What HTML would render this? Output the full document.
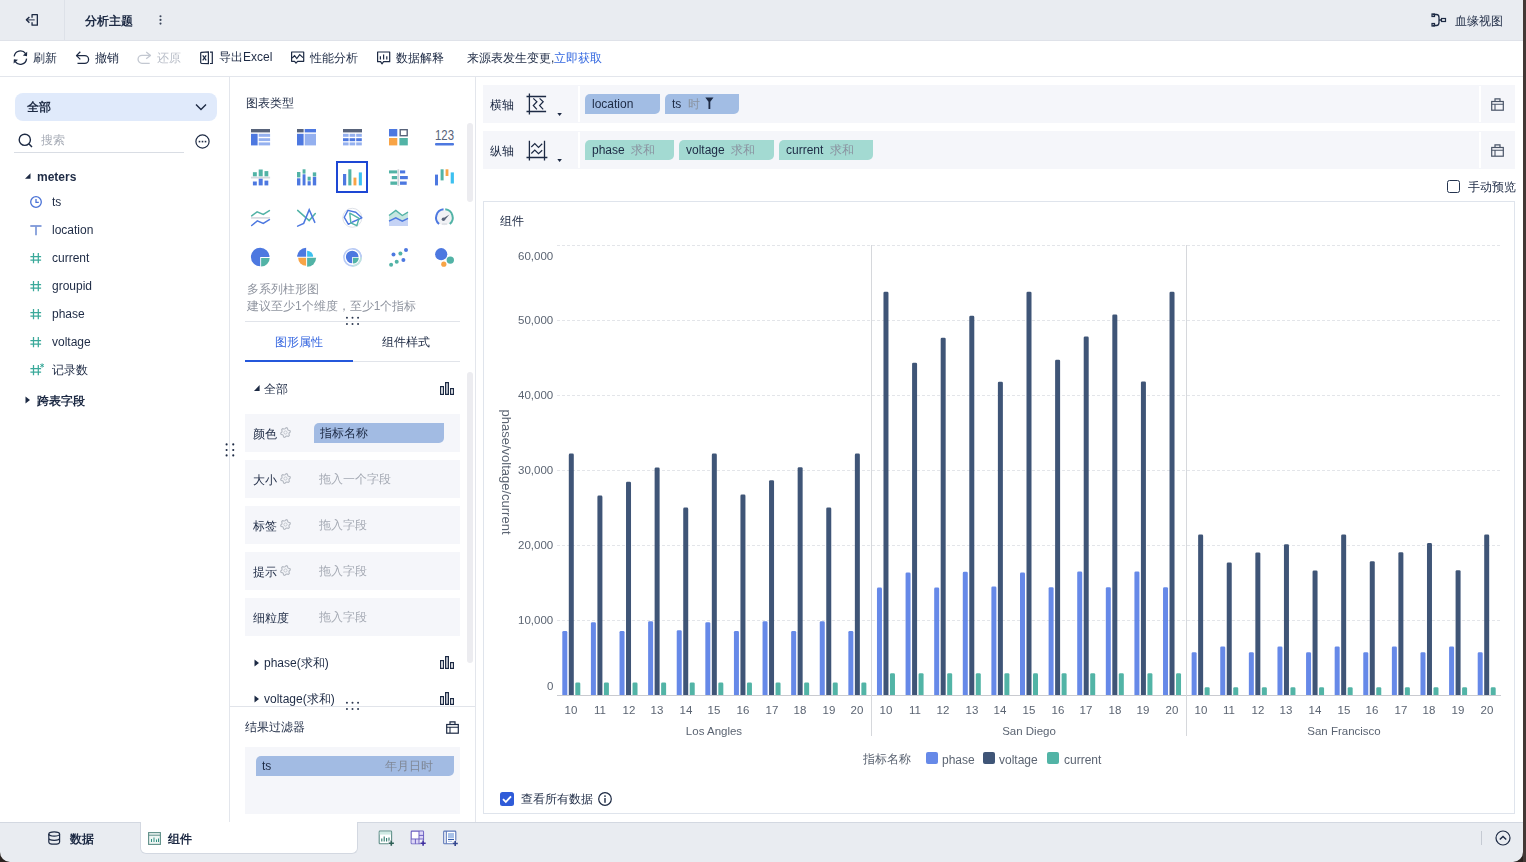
<!DOCTYPE html><html><head><meta charset="utf-8"><style>
html,body{margin:0;padding:0;width:1526px;height:862px;overflow:hidden;background:#fff;}
body{position:relative;font-family:"Liberation Sans",sans-serif;}
.t{position:absolute;white-space:nowrap;will-change:transform;}
.r{position:absolute;}
svg.r{overflow:visible;}
</style></head><body>
<div class="r" style="left:0px;top:0px;width:1526px;height:40px;background:#e9ecf1;"></div>
<div class="r" style="left:0px;top:40px;width:1526px;height:1px;background:#dfe2e9;"></div>
<div class="r" style="left:64px;top:0px;width:1px;height:40px;background:#dde1e8;"></div>
<svg class="r" style="left:25px;top:13px;" width="14" height="14" viewBox="0 0 14 14"><path d="M7.05 4.7V1.65H12.35V12.15H7.05V9.3" fill="none" stroke="#1d2a44" stroke-width="1.3" stroke-linejoin="round"/><path d="M1.6 6.85H9.7" stroke="#5b6579" stroke-width="1.4"/><path d="M4.4 4L1.4 6.85L4.4 9.7" fill="none" stroke="#1d2a44" stroke-width="1.4" stroke-linejoin="round"/></svg>
<span class="t" style="left:85px;top:11px;font-size:12px;line-height:20px;color:#1d2a44;font-weight:700;">分析主题</span>
<svg class="r" style="left:159px;top:14px;" width="3" height="12" viewBox="0 0 3 12"><circle cx="1.5" cy="2.2" r="1.05" fill="#3c475c"/><circle cx="1.5" cy="5.9" r="1.05" fill="#3c475c"/><circle cx="1.5" cy="9.6" r="1.05" fill="#3c475c"/></svg>
<svg class="r" style="left:1431px;top:13px;" width="16" height="14" viewBox="0 0 16 14"><path d="M1.5 1.5H5.5C7 1.5 8 3 8 4.5V7M1.5 12.5H5.5C7 12.5 8 11 8 9.5V7H10.5" fill="none" stroke="#1d2a44" stroke-width="1.3"/><rect x="1" y="1" width="2.5" height="2.5" fill="none" stroke="#1d2a44" stroke-width="1.2"/><rect x="1" y="10.5" width="2.5" height="2.5" fill="none" stroke="#1d2a44" stroke-width="1.2"/><rect x="10.5" y="5.5" width="4" height="3" fill="none" stroke="#1d2a44" stroke-width="1.2"/></svg>
<span class="t" style="left:1455px;top:11px;font-size:12px;line-height:20px;color:#1d2a44;font-weight:400;">血缘视图</span>
<div class="r" style="left:0px;top:76px;width:1526px;height:1px;background:#e3e6ec;"></div>
<svg class="r" style="left:0px;top:0px;" width="1" height="1" viewBox="0 0 1 1"></svg>
<svg class="r" style="left:13px;top:50px;" width="16" height="16" viewBox="0 0 16 16"><path d="M1.2 6.3A6.3 6.3 0 0 1 12.6 3.6" fill="none" stroke="#1d2a44" stroke-width="1.3"/><path d="M14.2 1.8L14 6.2L9.8 5.6Z" fill="#1d2a44"/><path d="M13.6 8.6A6.3 6.3 0 0 1 2.2 11.6" fill="none" stroke="#1d2a44" stroke-width="1.3"/><path d="M0.6 13.6L0.9 9.2L5 9.8Z" fill="#1d2a44"/></svg>
<span class="t" style="left:33px;top:48px;font-size:12px;line-height:20px;color:#1d2a44;font-weight:400;">刷新</span>
<svg class="r" style="left:75px;top:50px;" width="15" height="15" viewBox="0 0 15 15"><path d="M5.3 1.8L1.5 5.6L5.3 9.4" fill="none" stroke="#1d2a44" stroke-width="1.3" stroke-linejoin="round"/><path d="M1.5 5.6H9.7A3.9 3.9 0 0 1 9.7 13.4H2.5" fill="none" stroke="#1d2a44" stroke-width="1.3"/></svg>
<span class="t" style="left:95px;top:48px;font-size:12px;line-height:20px;color:#1d2a44;font-weight:400;">撤销</span>
<svg class="r" style="left:137px;top:50px;" width="15" height="15" viewBox="0 0 15 15"><path d="M9.2 2L13.5 5.4L9.2 8.7" fill="none" stroke="#c3c8d1" stroke-width="1.3" stroke-linejoin="round"/><path d="M13.5 5.4H5A3.9 3.9 0 0 0 5 13.3H12.7" fill="none" stroke="#c3c8d1" stroke-width="1.3"/></svg>
<span class="t" style="left:157px;top:48px;font-size:12px;line-height:20px;color:#b9bec8;font-weight:400;">还原</span>
<svg class="r" style="left:199px;top:50px;" width="16" height="16" viewBox="0 0 16 16"><path d="M1.7 3A1 1 0 0 1 2.5 2.3L9.4 1.9V13.7L2.5 13.3A1 1 0 0 1 1.7 12.6Z" fill="none" stroke="#1d2a44" stroke-width="1.2"/><path d="M3.7 5.4L7.2 10.4M7.2 5.4L3.7 10.4" stroke="#1d2a44" stroke-width="1.2"/><path d="M11 2.2H13.3V13.5H11" fill="none" stroke="#1d2a44" stroke-width="1.2"/></svg>
<span class="t" style="left:219px;top:47.3px;font-size:12px;line-height:20px;color:#1d2a44;font-weight:400;">导出Excel</span>
<svg class="r" style="left:290px;top:50px;" width="15" height="15" viewBox="0 0 15 15"><path d="M1.6 2H13.7V11.3H7.6L6 13.2L4.6 11.3H1.6Z" fill="none" stroke="#1d2a44" stroke-width="1.2" stroke-linejoin="round"/><path d="M2.2 8L4.6 5.6L6.8 8.6L9.7 4.6L13 7.6" fill="none" stroke="#1d2a44" stroke-width="1.2"/></svg>
<span class="t" style="left:310px;top:48px;font-size:12px;line-height:20px;color:#1d2a44;font-weight:400;">性能分析</span>
<svg class="r" style="left:376px;top:50px;" width="15" height="16" viewBox="0 0 15 16"><path d="M1.6 2H13.7V11.7H7.6L6 13.8L4.6 11.7H1.6Z" fill="none" stroke="#1d2a44" stroke-width="1.2" stroke-linejoin="round"/><path d="M4.4 6.3V9.6M7.6 4.4V9.6M10.8 6.3V9.6" stroke="#1d2a44" stroke-width="1.2"/></svg>
<span class="t" style="left:396px;top:48px;font-size:12px;line-height:20px;color:#1d2a44;font-weight:400;">数据解释</span>
<span class="t" style="left:467px;top:48px;font-size:12px;line-height:20px;color:#1d2a44;font-weight:400;">来源表发生变更,<span style="color:#3569e0">立即获取</span></span>
<div class="r" style="left:229px;top:77px;width:1px;height:745px;background:#e3e6ec;"></div>
<div class="r" style="left:15px;top:93px;width:202px;height:28px;background:#e0eafb;border-radius:8px;"></div>
<span class="t" style="left:27px;top:97px;font-size:12px;line-height:20px;color:#1d2a44;font-weight:700;">全部</span>
<svg class="r" style="left:195px;top:103px;" width="12" height="8" viewBox="0 0 12 8"><path d="M1 1.5L6 6.5L11 1.5" fill="none" stroke="#1d2a44" stroke-width="1.4"/></svg>
<svg class="r" style="left:18px;top:133px;" width="16" height="16" viewBox="0 0 16 16"><circle cx="6.8" cy="6.8" r="5.6" fill="none" stroke="#1d2a44" stroke-width="1.4"/><path d="M10.8 10.8L14 14" stroke="#1d2a44" stroke-width="1.5"/></svg>
<span class="t" style="left:41px;top:130px;font-size:12px;line-height:20px;color:#a8adb7;font-weight:400;">搜索</span>
<div class="r" style="left:14px;top:152px;width:170px;height:1px;background:#d9dde4;"></div>
<svg class="r" style="left:194.5px;top:133.5px;" width="16" height="16" viewBox="0 0 16 16"><circle cx="7.5" cy="7.5" r="6.6" fill="none" stroke="#1d2a44" stroke-width="1.2"/><rect x="3.7" y="6.8" width="1.6" height="1.6" fill="#1d2a44"/><rect x="6.7" y="6.8" width="1.6" height="1.6" fill="#1d2a44"/><rect x="9.7" y="6.8" width="1.6" height="1.6" fill="#1d2a44"/></svg>
<svg class="r" style="left:24.5px;top:172.8px;" width="6" height="6" viewBox="0 0 6 6"><path d="M5.5 0.2V5.8H0Z" fill="#1d2a44"/></svg>
<span class="t" style="left:37px;top:166.5px;font-size:12px;line-height:20px;color:#1d2a44;font-weight:700;">meters</span>
<svg class="r" style="left:30px;top:195.5px;" width="12" height="12" viewBox="0 0 12 12"><circle cx="6" cy="6" r="5.3" fill="none" stroke="#4a72d6" stroke-width="1.3"/><path d="M6 3V6.3H8.8" fill="none" stroke="#4a72d6" stroke-width="1.3"/></svg>
<span class="t" style="left:52px;top:191.5px;font-size:12px;line-height:20px;color:#1d2a44;font-weight:400;">ts</span>
<svg class="r" style="left:30px;top:223.5px;" width="12" height="12" viewBox="0 0 12 12"><path d="M0.3 2H11.5" stroke="#4a6fc9" stroke-width="1.3"/><path d="M6 2V11.2" stroke="#7c98d8" stroke-width="1.7"/></svg>
<span class="t" style="left:52px;top:219.5px;font-size:12px;line-height:20px;color:#1d2a44;font-weight:400;">location</span>
<svg class="r" style="left:30px;top:251.5px;" width="14" height="12" viewBox="0 0 14 12"><path d="M3.5 1.1V11.3M8.3 1.1V11.3M0.4 4.6H11.1M0.4 8.1H11.1" stroke="#3aa99a" stroke-width="1.25"/></svg>
<span class="t" style="left:52px;top:247.5px;font-size:12px;line-height:20px;color:#1d2a44;font-weight:400;">current</span>
<svg class="r" style="left:30px;top:279.5px;" width="14" height="12" viewBox="0 0 14 12"><path d="M3.5 1.1V11.3M8.3 1.1V11.3M0.4 4.6H11.1M0.4 8.1H11.1" stroke="#3aa99a" stroke-width="1.25"/></svg>
<span class="t" style="left:52px;top:275.5px;font-size:12px;line-height:20px;color:#1d2a44;font-weight:400;">groupid</span>
<svg class="r" style="left:30px;top:307.5px;" width="14" height="12" viewBox="0 0 14 12"><path d="M3.5 1.1V11.3M8.3 1.1V11.3M0.4 4.6H11.1M0.4 8.1H11.1" stroke="#3aa99a" stroke-width="1.25"/></svg>
<span class="t" style="left:52px;top:303.5px;font-size:12px;line-height:20px;color:#1d2a44;font-weight:400;">phase</span>
<svg class="r" style="left:30px;top:335.5px;" width="14" height="12" viewBox="0 0 14 12"><path d="M3.5 1.1V11.3M8.3 1.1V11.3M0.4 4.6H11.1M0.4 8.1H11.1" stroke="#3aa99a" stroke-width="1.25"/></svg>
<span class="t" style="left:52px;top:331.5px;font-size:12px;line-height:20px;color:#1d2a44;font-weight:400;">voltage</span>
<svg class="r" style="left:30px;top:363.5px;" width="14" height="12" viewBox="0 0 14 12"><path d="M3.5 1.1V11.3M8.3 1.1V11.3M0.4 4.6H11.1M0.4 8.1H11.1" stroke="#3aa99a" stroke-width="1.25"/><path d="M12.1 -0.6V3.6M10.3 0.4L13.9 2.6M13.9 0.4L10.3 2.6" stroke="#3aa99a" stroke-width="1"/></svg>
<span class="t" style="left:52px;top:360px;font-size:12px;line-height:20px;color:#1d2a44;font-weight:400;">记录数</span>
<svg class="r" style="left:25px;top:396px;" width="6" height="8" viewBox="0 0 6 8"><path d="M0.5 0.5L5 4L0.5 7.5Z" fill="#1d2a44"/></svg>
<span class="t" style="left:37px;top:391px;font-size:12px;line-height:20px;color:#1d2a44;font-weight:700;">跨表字段</span>
<div class="r" style="left:475px;top:77px;width:1px;height:745px;background:#e3e6ec;"></div>
<span class="t" style="left:246px;top:93px;font-size:12px;line-height:20px;color:#1d2a44;font-weight:400;">图表类型</span>
<svg class="r" style="left:250.8px;top:128.9px;" width="20" height="18" viewBox="0 0 20 18"><rect x="0" y="0" width="19" height="3.4" fill="#58637a"/><rect x="0" y="4.8" width="6.6" height="11.6" fill="#4d78e0"/><rect x="7.7" y="4.8" width="11.4" height="3" fill="#94b0ef"/><rect x="7.7" y="9.2" width="11.4" height="2.9" fill="#94b0ef"/><rect x="7.7" y="13.4" width="11.4" height="3" fill="#94b0ef"/></svg>
<svg class="r" style="left:296.8px;top:128.9px;" width="20" height="18" viewBox="0 0 20 18"><rect x="0" y="0" width="6.6" height="3.4" fill="#58637a"/><rect x="7.7" y="0" width="11.3" height="3.4" fill="#4d78e0"/><rect x="0" y="4.8" width="6.6" height="11.6" fill="#4d78e0"/><rect x="7.7" y="4.8" width="11.3" height="11.6" fill="#94b0ef"/></svg>
<svg class="r" style="left:342.9px;top:128.9px;" width="20" height="18" viewBox="0 0 20 18"><rect x="0" y="0" width="19" height="3.4" fill="#58637a"/><rect x="0.0" y="4.8" width="5.6" height="3" fill="#94b0ef"/><rect x="6.6" y="4.8" width="5.6" height="3" fill="#94b0ef"/><rect x="13.2" y="4.8" width="5.6" height="3" fill="#94b0ef"/><rect x="0.0" y="9.2" width="5.6" height="3" fill="#4d78e0"/><rect x="6.6" y="9.2" width="5.6" height="3" fill="#4d78e0"/><rect x="13.2" y="9.2" width="5.6" height="3" fill="#4d78e0"/><rect x="0.0" y="13.4" width="5.6" height="3" fill="#94b0ef"/><rect x="6.6" y="13.4" width="5.6" height="3" fill="#94b0ef"/><rect x="13.2" y="13.4" width="5.6" height="3" fill="#94b0ef"/></svg>
<svg class="r" style="left:388.9px;top:128.9px;" width="20" height="18" viewBox="0 0 20 18"><rect x="0" y="0" width="8.3" height="7.4" fill="#4d78e0"/><rect x="11.2" y="0.7" width="7" height="6" fill="none" stroke="#58637a" stroke-width="1.4"/><rect x="0" y="9" width="8.3" height="7.4" fill="#f8a446"/><rect x="10.4" y="9" width="8.4" height="7.4" fill="#52b3a6"/></svg>
<svg class="r" style="left:434.9px;top:128.9px;" width="20" height="18" viewBox="0 0 20 18"><text x="0" y="11.1" font-size="15.5" fill="#58637a" font-family="Liberation Sans" textLength="19" lengthAdjust="spacingAndGlyphs">123</text><rect x="0" y="14.1" width="19" height="2.3" rx="1" fill="#4d78e0"/></svg>
<svg class="r" style="left:250.8px;top:168.9px;" width="20" height="18" viewBox="0 0 20 18"><rect x="1.9" y="3.2" width="3.9" height="4.2" fill="#52b3a6"/><rect x="7.7" y="0.5" width="4" height="6.9" fill="#52b3a6"/><rect x="13.5" y="2.1" width="3.8" height="5.3" fill="#52b3a6"/><rect x="0" y="7.7" width="19.1" height="1.8" fill="#d5d8de"/><rect x="1.9" y="12.5" width="3.9" height="3.9" fill="#4d78e0"/><rect x="7.7" y="9.7" width="4" height="6.7" fill="#4d78e0"/><rect x="13.5" y="11.6" width="3.8" height="4.8" fill="#4d78e0"/></svg>
<svg class="r" style="left:296.8px;top:168.9px;" width="20" height="18" viewBox="0 0 20 18"><rect x="0" y="3" width="3.4" height="5.4" fill="#52b3a6"/><rect x="0" y="9.3" width="3.4" height="7.1" fill="#4d78e0"/><rect x="5.6" y="0.3" width="2.9" height="4.3" fill="#52b3a6"/><rect x="5.6" y="5.3" width="2.9" height="11.1" fill="#4d78e0"/><rect x="10.6" y="7.7" width="3.1" height="3.9" fill="#52b3a6"/><rect x="10.6" y="12.2" width="3.1" height="4.2" fill="#4d78e0"/><rect x="15.8" y="3.4" width="3.4" height="4" fill="#52b3a6"/><rect x="15.8" y="7.9" width="3.4" height="8.5" fill="#4d78e0"/></svg>
<svg class="r" style="left:342.9px;top:168.9px;" width="20" height="18" viewBox="0 0 20 18"><rect x="0" y="5" width="3.2" height="11.4" fill="#4d78e0"/><rect x="5.3" y="0.3" width="3.1" height="16.1" fill="#52b3a6"/><rect x="10.5" y="8.6" width="2.9" height="7.8" fill="#f8a446"/><rect x="15.8" y="3.4" width="3.1" height="13" fill="#3cc0f0"/></svg>
<svg class="r" style="left:388.9px;top:168.9px;" width="20" height="18" viewBox="0 0 20 18"><rect x="0" y="1.4" width="8.3" height="3" fill="#52b3a6"/><rect x="2.8" y="7" width="5.5" height="3.2" fill="#52b3a6"/><rect x="1.4" y="12.5" width="6.9" height="3.3" fill="#52b3a6"/><rect x="8.5" y="0.3" width="1.7" height="16.7" fill="#d0d3d9"/><rect x="11" y="1.4" width="5.2" height="3" fill="#4d78e0"/><rect x="11" y="7" width="7.8" height="3.2" fill="#4d78e0"/><rect x="11" y="12.5" width="6.7" height="3.3" fill="#4d78e0"/></svg>
<svg class="r" style="left:434.9px;top:168.9px;" width="20" height="18" viewBox="0 0 20 18"><rect x="0" y="5.6" width="3" height="10.8" fill="#4d78e0"/><rect x="5.6" y="0.3" width="3" height="11.1" fill="#52b3a6"/><rect x="10.6" y="0.3" width="2.8" height="6.7" fill="#f8a446"/><rect x="15.7" y="3.4" width="3.2" height="11.1" fill="#3cc0f0"/></svg>
<svg class="r" style="left:250.8px;top:208.5px;" width="20" height="18" viewBox="0 0 20 18"><polyline points="0.7,6.9 6.1,2.8 12.3,5.5 18.4,1.6" fill="none" stroke="#52b3a6" stroke-width="1.5" stroke-linecap="round"/><rect x="0" y="8.1" width="19" height="1.6" fill="#d5d8de"/><polyline points="0.7,16.5 6.3,11.9 12.3,14.4 18.4,10.7" fill="none" stroke="#4d78e0" stroke-width="1.5" stroke-linecap="round"/></svg>
<svg class="r" style="left:296.8px;top:208.5px;" width="20" height="18" viewBox="0 0 20 18"><polyline points="0.65,1.4 12.2,11.6 18.3,4.6" fill="none" stroke="#52b3a6" stroke-width="1.5" stroke-linecap="round"/><polyline points="0.65,17.1 6.7,14.4 12.2,0.7 17.8,13.4" fill="none" stroke="#4d78e0" stroke-width="1.5" stroke-linecap="round"/></svg>
<svg class="r" style="left:342.9px;top:208.5px;" width="20" height="18" viewBox="0 0 20 18"><circle cx="9.3" cy="8.8" r="9.5" fill="none" stroke="#dfe2e8" stroke-width="1"/><polygon points="4.9,1.4 12.8,3.2 18.8,8.8 9.5,13 5.4,15.3 1.3,8.3" fill="none" stroke="#4d78e0" stroke-width="1.4" stroke-linejoin="round"/><polygon points="6.8,4.2 16.1,9.3 13.8,16.7 7.8,13.9" fill="none" stroke="#52b3a6" stroke-width="1.4" stroke-linejoin="round"/></svg>
<svg class="r" style="left:388.9px;top:208.5px;" width="20" height="18" viewBox="0 0 20 18"><polygon points="0,6.5 6.8,1.4 13.3,6.5 19,3.2 19,9.3 13.3,12.2 6.8,8.8 0,12.2" fill="#c5e6e0"/><polygon points="0,12.2 6.8,8.8 13.3,12.2 19,9.3 19,17.1 0,17.1" fill="#c5d3f5"/><polyline points="0,6.5 6.8,1.4 13.3,6.5 19,3.2" fill="none" stroke="#52b3a6" stroke-width="1.4"/><polyline points="0,12.2 6.8,8.8 13.3,12.2 19,9.3" fill="none" stroke="#4d78e0" stroke-width="1.4"/></svg>
<svg class="r" style="left:434.9px;top:208.5px;" width="20" height="18" viewBox="0 0 20 18"><circle cx="9.4" cy="8.6" r="7.6" fill="#f1f2f5"/><path d="M4.06 14.96A8.3 8.3 0 0 1 8.53 0.35" fill="none" stroke="#4d78e0" stroke-width="2"/><path d="M10.27 0.35A8.3 8.3 0 0 1 14.74 14.96" fill="none" stroke="#52b3a6" stroke-width="2"/><path d="M7.6 9.8L14.4 5.6L9.6 11.2Z" fill="#58637a"/><circle cx="8.4" cy="10.3" r="1.7" fill="#58637a"/><rect x="7" y="14.6" width="5" height="0.8" fill="#c8ccd4"/></svg>
<svg class="r" style="left:250.8px;top:248px;" width="20" height="18" viewBox="0 0 20 18"><path d="M9.2 9.0L9.20 18.30A9.3 9.3 0 1 1 18.50 9.00Z" fill="#4d78e0"/><path d="M10.1 9.9L18.70 9.90A8.6 8.6 0 0 1 10.10 18.50Z" fill="#52b3a6"/></svg>
<svg class="r" style="left:296.8px;top:248px;" width="20" height="18" viewBox="0 0 20 18"><path d="M9.15 8.8L0.15 8.80A9 9 0 0 1 9.15 -0.20Z" fill="#4d78e0"/><path d="M10.15 8.8L10.15 2.80A6 6 0 0 1 16.15 8.80Z" fill="#3cc0f0"/><path d="M9.15 9.8L9.15 17.80A8 8 0 0 1 1.15 9.80Z" fill="#f8a446"/><path d="M10.15 9.8L19.15 9.80A9 9 0 0 1 10.15 18.80Z" fill="#52b3a6"/></svg>
<svg class="r" style="left:342.9px;top:248px;" width="20" height="18" viewBox="0 0 20 18"><circle cx="9.5" cy="9.3" r="8.6" fill="none" stroke="#b9cbf5" stroke-width="1.6"/><path d="M9.5 0.7A8.6 8.6 0 0 1 18.1 9.3" fill="none" stroke="#b9cbf5" stroke-width="1.6"/><path d="M18.1 9.3A8.6 8.6 0 0 1 9.5 17.9" fill="none" stroke="#bfe3dd" stroke-width="1.6"/><path d="M9.2 9.0L9.20 15.30A6.3 6.3 0 1 1 15.50 9.00Z" fill="#4d78e0"/><path d="M10.0 9.8L15.80 9.80A5.8 5.8 0 0 1 10.00 15.60Z" fill="#52b3a6"/></svg>
<svg class="r" style="left:388.9px;top:248px;" width="20" height="18" viewBox="0 0 20 18"><circle cx="4.5" cy="6.5" r="2" fill="#4d78e0"/><circle cx="11.4" cy="5.6" r="2" fill="#52b3a6"/><circle cx="17" cy="1.9" r="2" fill="#4d78e0"/><circle cx="7.7" cy="13.7" r="2" fill="#52b3a6"/><circle cx="14.4" cy="12.1" r="2" fill="#4d78e0"/><circle cx="2.1" cy="16.7" r="2" fill="#52b3a6"/></svg>
<svg class="r" style="left:434.9px;top:248px;" width="20" height="18" viewBox="0 0 20 18"><circle cx="6.2" cy="6.2" r="6.1" fill="#4d78e0"/><circle cx="15.3" cy="12.1" r="3.7" fill="#52b3a6"/><circle cx="8.8" cy="16.2" r="2.6" fill="#f8a446"/></svg>
<div class="r" style="left:336px;top:161px;width:28px;height:28px;border:2px solid #1d47d4;"></div>
<div class="r" style="left:467px;top:123px;width:6px;height:79px;background:#ececf0;border-radius:3px;"></div>
<div class="r" style="left:467px;top:372px;width:6px;height:291px;background:#ececf0;border-radius:3px;"></div>
<span class="t" style="left:246.5px;top:279px;font-size:12px;line-height:20px;color:#9095a0;font-weight:400;">多系列柱形图</span>
<span class="t" style="left:246.5px;top:295.7px;font-size:12px;line-height:20px;color:#9095a0;font-weight:400;">建议至少1个维度，至少1个指标</span>
<div class="r" style="left:245px;top:321px;width:215px;height:1px;background:#e1e4ea;"></div>
<svg class="r" style="left:346px;top:317px;" width="14" height="8" viewBox="0 0 14 8"><circle cx="0.95" cy="0.80" r="1.0" fill="#2c3850"/><circle cx="6.52" cy="0.80" r="1.0" fill="#2c3850"/><circle cx="12.09" cy="0.80" r="1.0" fill="#2c3850"/><circle cx="0.95" cy="6.90" r="1.0" fill="#2c3850"/><circle cx="6.52" cy="6.90" r="1.0" fill="#2c3850"/><circle cx="12.09" cy="6.90" r="1.0" fill="#2c3850"/></svg>
<span class="t" style="left:199px;width:200px;top:332px;font-size:12px;line-height:20px;color:#3566e0;font-weight:400;text-align:center;">图形属性</span>
<span class="t" style="left:306px;width:200px;top:332px;font-size:12px;line-height:20px;color:#1d2a44;font-weight:400;text-align:center;">组件样式</span>
<div class="r" style="left:245px;top:361px;width:215px;height:1px;background:#e1e4ea;"></div>
<div class="r" style="left:245px;top:359.5px;width:108px;height:2px;background:#2457db;"></div>
<svg class="r" style="left:253.8px;top:385.2px;" width="6" height="6" viewBox="0 0 6 6"><path d="M5.6 0V6H0Z" fill="#1d2a44"/></svg>
<span class="t" style="left:263.5px;top:379px;font-size:12px;line-height:20px;color:#1d2a44;font-weight:400;">全部</span>
<svg class="r" style="left:439.8px;top:382px;" width="14" height="13" viewBox="0 0 14 13"><rect x="0.6" y="4.6" width="2.8" height="7.8" fill="none" stroke="#1d2a44" stroke-width="1.2"/><rect x="5.6" y="0.6" width="2.8" height="11.8" fill="#d5d8de" stroke="#1d2a44" stroke-width="1.2"/><rect x="10.6" y="6.6" width="2.8" height="5.8" fill="none" stroke="#1d2a44" stroke-width="1.2"/></svg>
<div class="r" style="left:245px;top:414px;width:215px;height:37.5px;background:#f5f6fa;"></div>
<span class="t" style="left:253px;top:424px;font-size:12px;line-height:20px;color:#1d2a44;font-weight:400;">颜色</span>
<svg class="r" style="left:279.6px;top:427px;" width="11" height="11" viewBox="0 0 11 11"><polygon points="6.14,0.64 7.38,0.97 7.75,2.56 8.44,3.25 10.03,3.62 10.36,4.86 9.17,5.98 8.92,6.92 9.39,8.48 8.48,9.39 6.92,8.92 5.98,9.17 4.86,10.36 3.62,10.03 3.25,8.44 2.56,7.75 0.97,7.38 0.64,6.14 1.83,5.02 2.08,4.08 1.61,2.52 2.52,1.61 4.08,2.08 5.02,1.83" fill="none" stroke="#b5bac3" stroke-width="1.1" stroke-linejoin="round"/><circle cx="5.5" cy="5.5" r="1.6" fill="none" stroke="#bfc4cc" stroke-width="0.9"/></svg>
<div class="r" style="left:245px;top:460px;width:215px;height:37.5px;background:#f5f6fa;"></div>
<span class="t" style="left:253px;top:470px;font-size:12px;line-height:20px;color:#1d2a44;font-weight:400;">大小</span>
<svg class="r" style="left:279.6px;top:473px;" width="11" height="11" viewBox="0 0 11 11"><polygon points="6.14,0.64 7.38,0.97 7.75,2.56 8.44,3.25 10.03,3.62 10.36,4.86 9.17,5.98 8.92,6.92 9.39,8.48 8.48,9.39 6.92,8.92 5.98,9.17 4.86,10.36 3.62,10.03 3.25,8.44 2.56,7.75 0.97,7.38 0.64,6.14 1.83,5.02 2.08,4.08 1.61,2.52 2.52,1.61 4.08,2.08 5.02,1.83" fill="none" stroke="#b5bac3" stroke-width="1.1" stroke-linejoin="round"/><circle cx="5.5" cy="5.5" r="1.6" fill="none" stroke="#bfc4cc" stroke-width="0.9"/></svg>
<span class="t" style="left:319px;top:469px;font-size:12px;line-height:20px;color:#a4a9b3;font-weight:400;">拖入一个字段</span>
<div class="r" style="left:245px;top:506px;width:215px;height:37.5px;background:#f5f6fa;"></div>
<span class="t" style="left:253px;top:516px;font-size:12px;line-height:20px;color:#1d2a44;font-weight:400;">标签</span>
<svg class="r" style="left:279.6px;top:519px;" width="11" height="11" viewBox="0 0 11 11"><polygon points="6.14,0.64 7.38,0.97 7.75,2.56 8.44,3.25 10.03,3.62 10.36,4.86 9.17,5.98 8.92,6.92 9.39,8.48 8.48,9.39 6.92,8.92 5.98,9.17 4.86,10.36 3.62,10.03 3.25,8.44 2.56,7.75 0.97,7.38 0.64,6.14 1.83,5.02 2.08,4.08 1.61,2.52 2.52,1.61 4.08,2.08 5.02,1.83" fill="none" stroke="#b5bac3" stroke-width="1.1" stroke-linejoin="round"/><circle cx="5.5" cy="5.5" r="1.6" fill="none" stroke="#bfc4cc" stroke-width="0.9"/></svg>
<span class="t" style="left:319px;top:515px;font-size:12px;line-height:20px;color:#a4a9b3;font-weight:400;">拖入字段</span>
<div class="r" style="left:245px;top:552px;width:215px;height:37.5px;background:#f5f6fa;"></div>
<span class="t" style="left:253px;top:562px;font-size:12px;line-height:20px;color:#1d2a44;font-weight:400;">提示</span>
<svg class="r" style="left:279.6px;top:565px;" width="11" height="11" viewBox="0 0 11 11"><polygon points="6.14,0.64 7.38,0.97 7.75,2.56 8.44,3.25 10.03,3.62 10.36,4.86 9.17,5.98 8.92,6.92 9.39,8.48 8.48,9.39 6.92,8.92 5.98,9.17 4.86,10.36 3.62,10.03 3.25,8.44 2.56,7.75 0.97,7.38 0.64,6.14 1.83,5.02 2.08,4.08 1.61,2.52 2.52,1.61 4.08,2.08 5.02,1.83" fill="none" stroke="#b5bac3" stroke-width="1.1" stroke-linejoin="round"/><circle cx="5.5" cy="5.5" r="1.6" fill="none" stroke="#bfc4cc" stroke-width="0.9"/></svg>
<span class="t" style="left:319px;top:561px;font-size:12px;line-height:20px;color:#a4a9b3;font-weight:400;">拖入字段</span>
<div class="r" style="left:245px;top:598px;width:215px;height:37.5px;background:#f5f6fa;"></div>
<span class="t" style="left:253px;top:608px;font-size:12px;line-height:20px;color:#1d2a44;font-weight:400;">细粒度</span>
<span class="t" style="left:319px;top:607px;font-size:12px;line-height:20px;color:#a4a9b3;font-weight:400;">拖入字段</span>
<div class="r" style="left:314px;top:423px;width:130px;height:19.5px;background:#a2bbe3;border-radius:5px 0 5px 0;"></div>
<span class="t" style="left:320px;top:423px;font-size:12px;line-height:20px;color:#1d2a44;font-weight:400;">指标名称</span>
<svg class="r" style="left:254px;top:659px;" width="6" height="8" viewBox="0 0 6 8"><path d="M0.5 0.5L5 4L0.5 7.5Z" fill="#1d2a44"/></svg>
<span class="t" style="left:263.5px;top:653px;font-size:12px;line-height:20px;color:#1d2a44;font-weight:400;">phase(求和)</span>
<svg class="r" style="left:439.8px;top:656px;" width="14" height="13" viewBox="0 0 14 13"><rect x="0.6" y="4.6" width="2.8" height="7.8" fill="none" stroke="#1d2a44" stroke-width="1.2"/><rect x="5.6" y="0.6" width="2.8" height="11.8" fill="#d5d8de" stroke="#1d2a44" stroke-width="1.2"/><rect x="10.6" y="6.6" width="2.8" height="5.8" fill="none" stroke="#1d2a44" stroke-width="1.2"/></svg>
<svg class="r" style="left:254px;top:695px;" width="6" height="8" viewBox="0 0 6 8"><path d="M0.5 0.5L5 4L0.5 7.5Z" fill="#1d2a44"/></svg>
<span class="t" style="left:263.5px;top:689px;font-size:12px;line-height:20px;color:#1d2a44;font-weight:400;">voltage(求和)</span>
<svg class="r" style="left:439.8px;top:692px;" width="14" height="13" viewBox="0 0 14 13"><rect x="0.6" y="4.6" width="2.8" height="7.8" fill="none" stroke="#1d2a44" stroke-width="1.2"/><rect x="5.6" y="0.6" width="2.8" height="11.8" fill="#d5d8de" stroke="#1d2a44" stroke-width="1.2"/><rect x="10.6" y="6.6" width="2.8" height="5.8" fill="none" stroke="#1d2a44" stroke-width="1.2"/></svg>
<div class="r" style="left:230px;top:706px;width:245px;height:116px;background:#ffffff;"></div>
<div class="r" style="left:230px;top:706px;width:245px;height:1px;background:#e1e4ea;"></div>
<svg class="r" style="left:346px;top:702px;" width="14" height="8" viewBox="0 0 14 8"><circle cx="0.95" cy="0.80" r="1.0" fill="#2c3850"/><circle cx="6.52" cy="0.80" r="1.0" fill="#2c3850"/><circle cx="12.09" cy="0.80" r="1.0" fill="#2c3850"/><circle cx="0.95" cy="6.90" r="1.0" fill="#2c3850"/><circle cx="6.52" cy="6.90" r="1.0" fill="#2c3850"/><circle cx="12.09" cy="6.90" r="1.0" fill="#2c3850"/></svg>
<span class="t" style="left:245.4px;top:717px;font-size:12px;line-height:20px;color:#1d2a44;font-weight:400;">结果过滤器</span>
<svg class="r" style="left:445.8px;top:720.8px;" width="13" height="13" viewBox="0 0 13 13"><path d="M4 3.5V0.8H9V3.5" fill="none" stroke="#1d2a44" stroke-width="1.2"/><rect x="0.7" y="3.5" width="11.6" height="8.7" fill="none" stroke="#1d2a44" stroke-width="1.2"/><path d="M0.7 6.3H12.3M4 6.3V12" fill="none" stroke="#1d2a44" stroke-width="1.1"/></svg>
<div class="r" style="left:245px;top:747px;width:215px;height:67px;background:#f5f6fa;"></div>
<div class="r" style="left:256px;top:756px;width:198px;height:20px;background:#a2bbe3;border-radius:5px 0 5px 0;"></div>
<span class="t" style="left:262px;top:756px;font-size:12px;line-height:20px;color:#1d2a44;font-weight:400;">ts</span>
<span class="t" style="right:1093px;top:756px;font-size:12px;line-height:20px;color:#7f8796;font-weight:400;text-align:right;">年月日时</span>
<div class="r" style="left:0px;top:822px;width:1526px;height:40px;background:#e9ecf1;"></div>
<div class="r" style="left:0px;top:822px;width:141px;height:1px;background:#d3d8e1;"></div>
<div class="r" style="left:357px;top:822px;width:1169px;height:1px;background:#d3d8e1;"></div>
<div class="r" style="left:140px;top:822px;width:216px;height:30.5px;background:#fff;border-left:1px solid #d3d8e1;border-bottom:1px solid #d3d8e1;border-right:1px solid #d3d8e1;border-radius:0 0 6px 6px;"></div>
<svg class="r" style="left:47.5px;top:831px;" width="13" height="14" viewBox="0 0 13 14"><ellipse cx="6.2" cy="3" rx="5.4" ry="2.2" fill="none" stroke="#1d2a44" stroke-width="1.2"/><path d="M0.8 3V10.9C0.8 12.2 3.2 13.2 6.2 13.2S11.6 12.2 11.6 10.9V3M0.8 7C0.8 8.3 3.2 9.3 6.2 9.3S11.6 8.3 11.6 7" fill="none" stroke="#1d2a44" stroke-width="1.2"/></svg>
<span class="t" style="left:70px;top:829px;font-size:12px;line-height:20px;color:#1d2a44;font-weight:700;">数据</span>
<svg class="r" style="left:148px;top:832px;" width="13" height="13" viewBox="0 0 13 13"><rect x="0.6" y="0.6" width="11.8" height="11.8" fill="#eef5f3" stroke="#5f8f88" stroke-width="1.1"/><path d="M0.6 3.2H12.4" stroke="#5f8f88" stroke-width="1"/><path d="M3.5 10V7M6 10V5.5M8.5 10V7.5M10.5 10V6.5" stroke="#2f8f80" stroke-width="1"/></svg>
<span class="t" style="left:167.5px;top:829px;font-size:12px;line-height:20px;color:#1d2a44;font-weight:700;">组件</span>
<svg class="r" style="left:378px;top:830px;" width="17" height="17" viewBox="0 0 17 17"><rect x="1.2" y="1.1" width="12.4" height="12.7" rx="0.8" fill="#fff" stroke="#5f8f88" stroke-width="1.1"/><rect x="1.7" y="1.6" width="11.4" height="3" fill="#cfe9e3"/><path d="M3.8 11.5V8.5M6.2 11.5V6.5M8.6 11.5V8M11 11.5V7.5" stroke="#2f7a6c" stroke-width="1.1"/><rect x="10.5" y="10.5" width="6" height="6" fill="#e9ecf1"/><path d="M13.3 10.6V15.8M10.7 13.2H15.9" stroke="#2d5f55" stroke-width="1.6"/></svg>
<svg class="r" style="left:410px;top:830px;" width="17" height="17" viewBox="0 0 17 17"><rect x="1.2" y="1.1" width="12.3" height="12.7" rx="0.8" fill="#fff" stroke="#6b5fc0" stroke-width="1.1"/><rect x="9.3" y="1.6" width="3.8" height="3.5" fill="#ddd6f7"/><rect x="9.3" y="5.8" width="3.8" height="3" fill="#ddd6f7"/><rect x="1.7" y="9.4" width="3.4" height="3.9" fill="#ddd6f7"/><rect x="5.7" y="9.4" width="3" height="3.9" fill="#ddd6f7"/><path d="M9 1.1V13.8M1.2 9H13.5M9 5.4H13.5M5.4 9V13.8" stroke="#6b5fc0" stroke-width="1"/><rect x="10.5" y="10.5" width="6" height="6" fill="#e9ecf1"/><path d="M13.1 10.6V15.8M10.5 13.2H15.7" stroke="#3f2f9f" stroke-width="1.6"/></svg>
<svg class="r" style="left:442px;top:830px;" width="17" height="17" viewBox="0 0 17 17"><rect x="1.7" y="1.1" width="12.1" height="12.7" rx="0.8" fill="#fff" stroke="#5a76b8" stroke-width="1.1"/><path d="M4.3 1.1V13.8" stroke="#5a76b8" stroke-width="1.1"/><rect x="6" y="3" width="6" height="5.3" fill="#a8c1e8"/><path d="M6 9.5H12" stroke="#3358a8" stroke-width="1"/><path d="M6 11.3H10" stroke="#a8c1e8" stroke-width="1"/><rect x="10.5" y="10.7" width="6" height="6" fill="#e9ecf1"/><path d="M13.2 10.9V16.1M10.6 13.5H15.8" stroke="#33468f" stroke-width="1.6"/></svg>
<div class="r" style="left:1481px;top:831px;width:1px;height:14px;background:#c5cad3;"></div>
<svg class="r" style="left:1495px;top:830px;" width="16" height="16" viewBox="0 0 16 16"><circle cx="8" cy="8" r="7" fill="none" stroke="#1d2a44" stroke-width="1.2"/><path d="M4.8 9.6L8 6.4L11.2 9.6" fill="none" stroke="#1d2a44" stroke-width="1.4"/></svg>
<div class="r" style="left:483px;top:85px;width:1032px;height:37.5px;background:#f5f6fa;"></div>
<div class="r" style="left:578px;top:86px;width:2px;height:36px;background:#ffffff;"></div>
<div class="r" style="left:1479px;top:86px;width:2px;height:36px;background:#ffffff;"></div>
<span class="t" style="left:489.5px;top:95px;font-size:12px;line-height:20px;color:#1d2a44;font-weight:400;">横轴</span>
<svg class="r" style="left:1490.7px;top:98px;" width="13" height="13" viewBox="0 0 13 13"><path d="M4 3.5V0.8H9V3.5" fill="none" stroke="#4a5568" stroke-width="1.2"/><rect x="0.7" y="3.5" width="11.6" height="8.7" fill="none" stroke="#4a5568" stroke-width="1.2"/><path d="M0.7 6.3H12.3M4 6.3V12" fill="none" stroke="#4a5568" stroke-width="1.1"/></svg>
<div class="r" style="left:483px;top:131px;width:1032px;height:37.5px;background:#f5f6fa;"></div>
<div class="r" style="left:578px;top:132px;width:2px;height:36px;background:#ffffff;"></div>
<div class="r" style="left:1479px;top:132px;width:2px;height:36px;background:#ffffff;"></div>
<span class="t" style="left:489.5px;top:141px;font-size:12px;line-height:20px;color:#1d2a44;font-weight:400;">纵轴</span>
<svg class="r" style="left:1490.7px;top:144px;" width="13" height="13" viewBox="0 0 13 13"><path d="M4 3.5V0.8H9V3.5" fill="none" stroke="#4a5568" stroke-width="1.2"/><rect x="0.7" y="3.5" width="11.6" height="8.7" fill="none" stroke="#4a5568" stroke-width="1.2"/><path d="M0.7 6.3H12.3M4 6.3V12" fill="none" stroke="#4a5568" stroke-width="1.1"/></svg>
<svg class="r" style="left:522px;top:88px;" width="44" height="32" viewBox="0 0 44 32"><path d="M7.4 5.6V26.4M4.5 8.5H24.1M4.5 23.5H24.1" stroke="#1d2a44" stroke-width="1.3"/><path d="M11.3 10.4L14.9 13.7L11.3 17.5L14.9 21.4M17.6 10.4L21.2 13.7L17.6 17.5L21.2 21.4" fill="none" stroke="#1d2a44" stroke-width="1.2"/><path d="M35.3 25.1H39.9L37.6 27.9Z" fill="#1d2a44"/></svg>
<svg class="r" style="left:522px;top:134px;" width="44" height="32" viewBox="0 0 44 32"><path d="M7.4 6.7V26.4M22.5 6.7V26.4M4.5 23.5H25.4" stroke="#1d2a44" stroke-width="1.3"/><path d="M9.3 13L12.8 9.65L16.5 13.4L20.2 9.8M9.3 19.5L12.8 16.15L16.5 19.7L20.2 16.3" fill="none" stroke="#1d2a44" stroke-width="1.2"/><path d="M35.3 25.1H39.9L37.6 27.9Z" fill="#1d2a44"/></svg>
<div class="r" style="left:585px;top:94px;width:75px;height:20px;background:#a2bde4;border-radius:5px 0 5px 0;"></div>
<span class="t" style="left:591.5px;top:94px;font-size:12px;line-height:20px;color:#1d2a44;font-weight:400;">location</span>
<div class="r" style="left:665px;top:94px;width:74px;height:20px;background:#a2bde4;border-radius:5px 0 5px 0;"></div>
<span class="t" style="left:671.5px;top:94px;font-size:12px;line-height:20px;color:#1d2a44;font-weight:400;">ts<span style="color:#8a93a0;margin-left:6.5px">时</span></span>
<svg class="r" style="left:705px;top:97px;" width="9" height="13" viewBox="0 0 9 13"><path d="M0.3 0.5H8.5L5.3 4.8V12H3.5V4.8Z" fill="#1d2a44"/></svg>
<div class="r" style="left:585px;top:140px;width:89px;height:20px;background:#a3dad2;border-radius:5px 0 5px 0;"></div>
<span class="t" style="left:591.5px;top:140px;font-size:12px;line-height:20px;color:#1d2a44;font-weight:400;">phase<span style="color:#8a93a0;margin-left:6.5px">求和</span></span>
<div class="r" style="left:679px;top:140px;width:95px;height:20px;background:#a3dad2;border-radius:5px 0 5px 0;"></div>
<span class="t" style="left:685.5px;top:140px;font-size:12px;line-height:20px;color:#1d2a44;font-weight:400;">voltage<span style="color:#8a93a0;margin-left:6.5px">求和</span></span>
<div class="r" style="left:779px;top:140px;width:94px;height:20px;background:#a3dad2;border-radius:5px 0 5px 0;"></div>
<span class="t" style="left:785.5px;top:140px;font-size:12px;line-height:20px;color:#1d2a44;font-weight:400;">current<span style="color:#8a93a0;margin-left:6.5px">求和</span></span>
<div class="r" style="left:1447px;top:180px;width:11px;height:11px;border:1.5px solid #243450;border-radius:2.5px;"></div>
<span class="t" style="left:1467.5px;top:177px;font-size:12px;line-height:20px;color:#1d2a44;font-weight:400;">手动预览</span>
<div class="r" style="left:483px;top:201px;width:1030px;height:611px;border:1px solid #dfe4ec;"></div>
<span class="t" style="left:499.5px;top:211px;font-size:12px;line-height:20px;color:#1d2a44;font-weight:400;">组件</span>
<svg class="r" style="left:0px;top:0px;pointer-events:none;" width="1526" height="862" viewBox="0 0 1526 862"><line x1="557.0" y1="620.5" x2="1501.0" y2="620.5" stroke="#e3e5e9" stroke-width="1" stroke-dasharray="3 2"/><line x1="557.0" y1="545.5" x2="1501.0" y2="545.5" stroke="#e3e5e9" stroke-width="1" stroke-dasharray="3 2"/><line x1="557.0" y1="470.5" x2="1501.0" y2="470.5" stroke="#e3e5e9" stroke-width="1" stroke-dasharray="3 2"/><line x1="557.0" y1="395.5" x2="1501.0" y2="395.5" stroke="#e3e5e9" stroke-width="1" stroke-dasharray="3 2"/><line x1="557.0" y1="320.5" x2="1501.0" y2="320.5" stroke="#e3e5e9" stroke-width="1" stroke-dasharray="3 2"/><line x1="557.0" y1="245.5" x2="1501.0" y2="245.5" stroke="#e3e5e9" stroke-width="1" stroke-dasharray="3 2"/><line x1="557.0" y1="695.5" x2="1501.0" y2="695.5" stroke="#c9cbd0" stroke-width="1"/><line x1="871.50" y1="245" x2="871.50" y2="736" stroke="#d6d8dc" stroke-width="1"/><line x1="1186.50" y1="245" x2="1186.50" y2="736" stroke="#d6d8dc" stroke-width="1"/><path d="M562.30 695.0V632.30Q562.30 631.00 563.60 631.00H566.00Q567.30 631.00 567.30 632.30V695.0Z" fill="#6689e8"/><path d="M568.80 695.0V454.90Q568.80 453.60 570.10 453.60H572.50Q573.80 453.60 573.80 454.90V695.0Z" fill="#3f5577"/><path d="M575.30 695.0V683.70Q575.30 682.40 576.60 682.40H579.00Q580.30 682.40 580.30 683.70V695.0Z" fill="#52b4a6"/><path d="M590.91 695.0V623.60Q590.91 622.30 592.21 622.30H594.61Q595.91 622.30 595.91 623.60V695.0Z" fill="#6689e8"/><path d="M597.41 695.0V496.90Q597.41 495.60 598.71 495.60H601.11Q602.41 495.60 602.41 496.90V695.0Z" fill="#3f5577"/><path d="M603.91 695.0V683.70Q603.91 682.40 605.21 682.40H607.61Q608.91 682.40 608.91 683.70V695.0Z" fill="#52b4a6"/><path d="M619.52 695.0V632.30Q619.52 631.00 620.82 631.00H623.22Q624.52 631.00 624.52 632.30V695.0Z" fill="#6689e8"/><path d="M626.02 695.0V483.00Q626.02 481.70 627.32 481.70H629.72Q631.02 481.70 631.02 483.00V695.0Z" fill="#3f5577"/><path d="M632.52 695.0V683.70Q632.52 682.40 633.82 682.40H636.22Q637.52 682.40 637.52 683.70V695.0Z" fill="#52b4a6"/><path d="M648.12 695.0V622.50Q648.12 621.20 649.42 621.20H651.82Q653.12 621.20 653.12 622.50V695.0Z" fill="#6689e8"/><path d="M654.62 695.0V468.80Q654.62 467.50 655.92 467.50H658.32Q659.62 467.50 659.62 468.80V695.0Z" fill="#3f5577"/><path d="M661.12 695.0V683.70Q661.12 682.40 662.42 682.40H664.82Q666.12 682.40 666.12 683.70V695.0Z" fill="#52b4a6"/><path d="M676.73 695.0V631.50Q676.73 630.20 678.03 630.20H680.43Q681.73 630.20 681.73 631.50V695.0Z" fill="#6689e8"/><path d="M683.23 695.0V508.90Q683.23 507.60 684.53 507.60H686.93Q688.23 507.60 688.23 508.90V695.0Z" fill="#3f5577"/><path d="M689.73 695.0V683.70Q689.73 682.40 691.03 682.40H693.43Q694.73 682.40 694.73 683.70V695.0Z" fill="#52b4a6"/><path d="M705.33 695.0V623.60Q705.33 622.30 706.63 622.30H709.03Q710.33 622.30 710.33 623.60V695.0Z" fill="#6689e8"/><path d="M711.83 695.0V454.90Q711.83 453.60 713.13 453.60H715.53Q716.83 453.60 716.83 454.90V695.0Z" fill="#3f5577"/><path d="M718.33 695.0V683.70Q718.33 682.40 719.63 682.40H722.03Q723.33 682.40 723.33 683.70V695.0Z" fill="#52b4a6"/><path d="M733.94 695.0V632.30Q733.94 631.00 735.24 631.00H737.64Q738.94 631.00 738.94 632.30V695.0Z" fill="#6689e8"/><path d="M740.44 695.0V495.90Q740.44 494.60 741.74 494.60H744.14Q745.44 494.60 745.44 495.90V695.0Z" fill="#3f5577"/><path d="M746.94 695.0V683.70Q746.94 682.40 748.24 682.40H750.64Q751.94 682.40 751.94 683.70V695.0Z" fill="#52b4a6"/><path d="M762.55 695.0V622.50Q762.55 621.20 763.85 621.20H766.25Q767.55 621.20 767.55 622.50V695.0Z" fill="#6689e8"/><path d="M769.05 695.0V481.60Q769.05 480.30 770.35 480.30H772.75Q774.05 480.30 774.05 481.60V695.0Z" fill="#3f5577"/><path d="M775.55 695.0V683.70Q775.55 682.40 776.85 682.40H779.25Q780.55 682.40 780.55 683.70V695.0Z" fill="#52b4a6"/><path d="M791.15 695.0V632.30Q791.15 631.00 792.45 631.00H794.85Q796.15 631.00 796.15 632.30V695.0Z" fill="#6689e8"/><path d="M797.65 695.0V468.60Q797.65 467.30 798.95 467.30H801.35Q802.65 467.30 802.65 468.60V695.0Z" fill="#3f5577"/><path d="M804.15 695.0V683.70Q804.15 682.40 805.45 682.40H807.85Q809.15 682.40 809.15 683.70V695.0Z" fill="#52b4a6"/><path d="M819.76 695.0V622.50Q819.76 621.20 821.06 621.20H823.46Q824.76 621.20 824.76 622.50V695.0Z" fill="#6689e8"/><path d="M826.26 695.0V508.70Q826.26 507.40 827.56 507.40H829.96Q831.26 507.40 831.26 508.70V695.0Z" fill="#3f5577"/><path d="M832.76 695.0V683.70Q832.76 682.40 834.06 682.40H836.46Q837.76 682.40 837.76 683.70V695.0Z" fill="#52b4a6"/><path d="M848.36 695.0V632.30Q848.36 631.00 849.66 631.00H852.06Q853.36 631.00 853.36 632.30V695.0Z" fill="#6689e8"/><path d="M854.86 695.0V454.90Q854.86 453.60 856.16 453.60H858.56Q859.86 453.60 859.86 454.90V695.0Z" fill="#3f5577"/><path d="M861.36 695.0V683.70Q861.36 682.40 862.66 682.40H865.06Q866.36 682.40 866.36 683.70V695.0Z" fill="#52b4a6"/><path d="M876.97 695.0V588.90Q876.97 587.60 878.27 587.60H880.67Q881.97 587.60 881.97 588.90V695.0Z" fill="#6689e8"/><path d="M883.47 695.0V293.00Q883.47 291.70 884.77 291.70H887.17Q888.47 291.70 888.47 293.00V695.0Z" fill="#3f5577"/><path d="M889.97 695.0V674.60Q889.97 673.30 891.27 673.30H893.67Q894.97 673.30 894.97 674.60V695.0Z" fill="#52b4a6"/><path d="M905.58 695.0V573.80Q905.58 572.50 906.88 572.50H909.28Q910.58 572.50 910.58 573.80V695.0Z" fill="#6689e8"/><path d="M912.08 695.0V364.00Q912.08 362.70 913.38 362.70H915.78Q917.08 362.70 917.08 364.00V695.0Z" fill="#3f5577"/><path d="M918.58 695.0V674.60Q918.58 673.30 919.88 673.30H922.28Q923.58 673.30 923.58 674.60V695.0Z" fill="#52b4a6"/><path d="M934.18 695.0V588.90Q934.18 587.60 935.48 587.60H937.88Q939.18 587.60 939.18 588.90V695.0Z" fill="#6689e8"/><path d="M940.68 695.0V339.00Q940.68 337.70 941.98 337.70H944.38Q945.68 337.70 945.68 339.00V695.0Z" fill="#3f5577"/><path d="M947.18 695.0V674.60Q947.18 673.30 948.48 673.30H950.88Q952.18 673.30 952.18 674.60V695.0Z" fill="#52b4a6"/><path d="M962.79 695.0V573.00Q962.79 571.70 964.09 571.70H966.49Q967.79 571.70 967.79 573.00V695.0Z" fill="#6689e8"/><path d="M969.29 695.0V317.00Q969.29 315.70 970.59 315.70H972.99Q974.29 315.70 974.29 317.00V695.0Z" fill="#3f5577"/><path d="M975.79 695.0V674.60Q975.79 673.30 977.09 673.30H979.49Q980.79 673.30 980.79 674.60V695.0Z" fill="#52b4a6"/><path d="M991.39 695.0V587.80Q991.39 586.50 992.69 586.50H995.09Q996.39 586.50 996.39 587.80V695.0Z" fill="#6689e8"/><path d="M997.89 695.0V383.00Q997.89 381.70 999.19 381.70H1001.59Q1002.89 381.70 1002.89 383.00V695.0Z" fill="#3f5577"/><path d="M1004.39 695.0V674.60Q1004.39 673.30 1005.69 673.30H1008.09Q1009.39 673.30 1009.39 674.60V695.0Z" fill="#52b4a6"/><path d="M1020.00 695.0V573.80Q1020.00 572.50 1021.30 572.50H1023.70Q1025.00 572.50 1025.00 573.80V695.0Z" fill="#6689e8"/><path d="M1026.50 695.0V293.00Q1026.50 291.70 1027.80 291.70H1030.20Q1031.50 291.70 1031.50 293.00V695.0Z" fill="#3f5577"/><path d="M1033.00 695.0V674.60Q1033.00 673.30 1034.30 673.30H1036.70Q1038.00 673.30 1038.00 674.60V695.0Z" fill="#52b4a6"/><path d="M1048.61 695.0V588.60Q1048.61 587.30 1049.91 587.30H1052.31Q1053.61 587.30 1053.61 588.60V695.0Z" fill="#6689e8"/><path d="M1055.11 695.0V361.00Q1055.11 359.70 1056.41 359.70H1058.81Q1060.11 359.70 1060.11 361.00V695.0Z" fill="#3f5577"/><path d="M1061.61 695.0V674.60Q1061.61 673.30 1062.91 673.30H1065.31Q1066.61 673.30 1066.61 674.60V695.0Z" fill="#52b4a6"/><path d="M1077.21 695.0V572.80Q1077.21 571.50 1078.51 571.50H1080.91Q1082.21 571.50 1082.21 572.80V695.0Z" fill="#6689e8"/><path d="M1083.71 695.0V337.80Q1083.71 336.50 1085.01 336.50H1087.41Q1088.71 336.50 1088.71 337.80V695.0Z" fill="#3f5577"/><path d="M1090.21 695.0V674.60Q1090.21 673.30 1091.51 673.30H1093.91Q1095.21 673.30 1095.21 674.60V695.0Z" fill="#52b4a6"/><path d="M1105.82 695.0V588.60Q1105.82 587.30 1107.12 587.30H1109.52Q1110.82 587.30 1110.82 588.60V695.0Z" fill="#6689e8"/><path d="M1112.32 695.0V315.70Q1112.32 314.40 1113.62 314.40H1116.02Q1117.32 314.40 1117.32 315.70V695.0Z" fill="#3f5577"/><path d="M1118.82 695.0V674.60Q1118.82 673.30 1120.12 673.30H1122.52Q1123.82 673.30 1123.82 674.60V695.0Z" fill="#52b4a6"/><path d="M1134.42 695.0V572.80Q1134.42 571.50 1135.72 571.50H1138.12Q1139.42 571.50 1139.42 572.80V695.0Z" fill="#6689e8"/><path d="M1140.92 695.0V382.70Q1140.92 381.40 1142.22 381.40H1144.62Q1145.92 381.40 1145.92 382.70V695.0Z" fill="#3f5577"/><path d="M1147.42 695.0V674.60Q1147.42 673.30 1148.72 673.30H1151.12Q1152.42 673.30 1152.42 674.60V695.0Z" fill="#52b4a6"/><path d="M1163.03 695.0V588.60Q1163.03 587.30 1164.33 587.30H1166.73Q1168.03 587.30 1168.03 588.60V695.0Z" fill="#6689e8"/><path d="M1169.53 695.0V293.00Q1169.53 291.70 1170.83 291.70H1173.23Q1174.53 291.70 1174.53 293.00V695.0Z" fill="#3f5577"/><path d="M1176.03 695.0V674.60Q1176.03 673.30 1177.33 673.30H1179.73Q1181.03 673.30 1181.03 674.60V695.0Z" fill="#52b4a6"/><path d="M1191.64 695.0V653.60Q1191.64 652.30 1192.94 652.30H1195.34Q1196.64 652.30 1196.64 653.60V695.0Z" fill="#6689e8"/><path d="M1198.14 695.0V535.80Q1198.14 534.50 1199.44 534.50H1201.84Q1203.14 534.50 1203.14 535.80V695.0Z" fill="#3f5577"/><path d="M1204.64 695.0V688.50Q1204.64 687.20 1205.94 687.20H1208.34Q1209.64 687.20 1209.64 688.50V695.0Z" fill="#52b4a6"/><path d="M1220.24 695.0V647.80Q1220.24 646.50 1221.54 646.50H1223.94Q1225.24 646.50 1225.24 647.80V695.0Z" fill="#6689e8"/><path d="M1226.74 695.0V563.80Q1226.74 562.50 1228.04 562.50H1230.44Q1231.74 562.50 1231.74 563.80V695.0Z" fill="#3f5577"/><path d="M1233.24 695.0V688.50Q1233.24 687.20 1234.54 687.20H1236.94Q1238.24 687.20 1238.24 688.50V695.0Z" fill="#52b4a6"/><path d="M1248.85 695.0V653.60Q1248.85 652.30 1250.15 652.30H1252.55Q1253.85 652.30 1253.85 653.60V695.0Z" fill="#6689e8"/><path d="M1255.35 695.0V553.80Q1255.35 552.50 1256.65 552.50H1259.05Q1260.35 552.50 1260.35 553.80V695.0Z" fill="#3f5577"/><path d="M1261.85 695.0V688.50Q1261.85 687.20 1263.15 687.20H1265.55Q1266.85 687.20 1266.85 688.50V695.0Z" fill="#52b4a6"/><path d="M1277.45 695.0V647.80Q1277.45 646.50 1278.75 646.50H1281.15Q1282.45 646.50 1282.45 647.80V695.0Z" fill="#6689e8"/><path d="M1283.95 695.0V545.60Q1283.95 544.30 1285.25 544.30H1287.65Q1288.95 544.30 1288.95 545.60V695.0Z" fill="#3f5577"/><path d="M1290.45 695.0V688.50Q1290.45 687.20 1291.75 687.20H1294.15Q1295.45 687.20 1295.45 688.50V695.0Z" fill="#52b4a6"/><path d="M1306.06 695.0V653.60Q1306.06 652.30 1307.36 652.30H1309.76Q1311.06 652.30 1311.06 653.60V695.0Z" fill="#6689e8"/><path d="M1312.56 695.0V571.80Q1312.56 570.50 1313.86 570.50H1316.26Q1317.56 570.50 1317.56 571.80V695.0Z" fill="#3f5577"/><path d="M1319.06 695.0V688.50Q1319.06 687.20 1320.36 687.20H1322.76Q1324.06 687.20 1324.06 688.50V695.0Z" fill="#52b4a6"/><path d="M1334.67 695.0V647.80Q1334.67 646.50 1335.97 646.50H1338.37Q1339.67 646.50 1339.67 647.80V695.0Z" fill="#6689e8"/><path d="M1341.17 695.0V535.80Q1341.17 534.50 1342.47 534.50H1344.87Q1346.17 534.50 1346.17 535.80V695.0Z" fill="#3f5577"/><path d="M1347.67 695.0V688.50Q1347.67 687.20 1348.97 687.20H1351.37Q1352.67 687.20 1352.67 688.50V695.0Z" fill="#52b4a6"/><path d="M1363.27 695.0V653.60Q1363.27 652.30 1364.57 652.30H1366.97Q1368.27 652.30 1368.27 653.60V695.0Z" fill="#6689e8"/><path d="M1369.77 695.0V562.60Q1369.77 561.30 1371.07 561.30H1373.47Q1374.77 561.30 1374.77 562.60V695.0Z" fill="#3f5577"/><path d="M1376.27 695.0V688.50Q1376.27 687.20 1377.57 687.20H1379.97Q1381.27 687.20 1381.27 688.50V695.0Z" fill="#52b4a6"/><path d="M1391.88 695.0V647.80Q1391.88 646.50 1393.18 646.50H1395.58Q1396.88 646.50 1396.88 647.80V695.0Z" fill="#6689e8"/><path d="M1398.38 695.0V553.50Q1398.38 552.20 1399.68 552.20H1402.08Q1403.38 552.20 1403.38 553.50V695.0Z" fill="#3f5577"/><path d="M1404.88 695.0V688.50Q1404.88 687.20 1406.18 687.20H1408.58Q1409.88 687.20 1409.88 688.50V695.0Z" fill="#52b4a6"/><path d="M1420.48 695.0V653.60Q1420.48 652.30 1421.78 652.30H1424.18Q1425.48 652.30 1425.48 653.60V695.0Z" fill="#6689e8"/><path d="M1426.98 695.0V544.40Q1426.98 543.10 1428.28 543.10H1430.68Q1431.98 543.10 1431.98 544.40V695.0Z" fill="#3f5577"/><path d="M1433.48 695.0V688.50Q1433.48 687.20 1434.78 687.20H1437.18Q1438.48 687.20 1438.48 688.50V695.0Z" fill="#52b4a6"/><path d="M1449.09 695.0V647.80Q1449.09 646.50 1450.39 646.50H1452.79Q1454.09 646.50 1454.09 647.80V695.0Z" fill="#6689e8"/><path d="M1455.59 695.0V571.60Q1455.59 570.30 1456.89 570.30H1459.29Q1460.59 570.30 1460.59 571.60V695.0Z" fill="#3f5577"/><path d="M1462.09 695.0V688.50Q1462.09 687.20 1463.39 687.20H1465.79Q1467.09 687.20 1467.09 688.50V695.0Z" fill="#52b4a6"/><path d="M1477.70 695.0V653.60Q1477.70 652.30 1479.00 652.30H1481.40Q1482.70 652.30 1482.70 653.60V695.0Z" fill="#6689e8"/><path d="M1484.20 695.0V535.80Q1484.20 534.50 1485.50 534.50H1487.90Q1489.20 534.50 1489.20 535.80V695.0Z" fill="#3f5577"/><path d="M1490.70 695.0V688.50Q1490.70 687.20 1492.00 687.20H1494.40Q1495.70 687.20 1495.70 688.50V695.0Z" fill="#52b4a6"/></svg>
<span class="t" style="right:972.5px;top:245.7px;font-size:11.5px;line-height:20px;color:#5b6472;font-weight:400;text-align:right;">60,000</span>
<span class="t" style="right:972.5px;top:310px;font-size:11.5px;line-height:20px;color:#5b6472;font-weight:400;text-align:right;">50,000</span>
<span class="t" style="right:972.5px;top:385px;font-size:11.5px;line-height:20px;color:#5b6472;font-weight:400;text-align:right;">40,000</span>
<span class="t" style="right:972.5px;top:460px;font-size:11.5px;line-height:20px;color:#5b6472;font-weight:400;text-align:right;">30,000</span>
<span class="t" style="right:972.5px;top:535px;font-size:11.5px;line-height:20px;color:#5b6472;font-weight:400;text-align:right;">20,000</span>
<span class="t" style="right:972.5px;top:610px;font-size:11.5px;line-height:20px;color:#5b6472;font-weight:400;text-align:right;">10,000</span>
<span class="t" style="right:972.5px;top:676px;font-size:11.5px;line-height:20px;color:#5b6472;font-weight:400;text-align:right;">0</span>
<span class="t" style="left:471.30303030303025px;width:200px;top:700px;font-size:11.5px;line-height:20px;color:#5b6472;font-weight:400;text-align:center;">10</span>
<span class="t" style="left:499.9090909090909px;width:200px;top:700px;font-size:11.5px;line-height:20px;color:#5b6472;font-weight:400;text-align:center;">11</span>
<span class="t" style="left:528.5151515151515px;width:200px;top:700px;font-size:11.5px;line-height:20px;color:#5b6472;font-weight:400;text-align:center;">12</span>
<span class="t" style="left:557.1212121212121px;width:200px;top:700px;font-size:11.5px;line-height:20px;color:#5b6472;font-weight:400;text-align:center;">13</span>
<span class="t" style="left:585.7272727272727px;width:200px;top:700px;font-size:11.5px;line-height:20px;color:#5b6472;font-weight:400;text-align:center;">14</span>
<span class="t" style="left:614.3333333333334px;width:200px;top:700px;font-size:11.5px;line-height:20px;color:#5b6472;font-weight:400;text-align:center;">15</span>
<span class="t" style="left:642.939393939394px;width:200px;top:700px;font-size:11.5px;line-height:20px;color:#5b6472;font-weight:400;text-align:center;">16</span>
<span class="t" style="left:671.5454545454545px;width:200px;top:700px;font-size:11.5px;line-height:20px;color:#5b6472;font-weight:400;text-align:center;">17</span>
<span class="t" style="left:700.1515151515151px;width:200px;top:700px;font-size:11.5px;line-height:20px;color:#5b6472;font-weight:400;text-align:center;">18</span>
<span class="t" style="left:728.7575757575758px;width:200px;top:700px;font-size:11.5px;line-height:20px;color:#5b6472;font-weight:400;text-align:center;">19</span>
<span class="t" style="left:757.3636363636364px;width:200px;top:700px;font-size:11.5px;line-height:20px;color:#5b6472;font-weight:400;text-align:center;">20</span>
<span class="t" style="left:785.969696969697px;width:200px;top:700px;font-size:11.5px;line-height:20px;color:#5b6472;font-weight:400;text-align:center;">10</span>
<span class="t" style="left:814.5757575757575px;width:200px;top:700px;font-size:11.5px;line-height:20px;color:#5b6472;font-weight:400;text-align:center;">11</span>
<span class="t" style="left:843.1818181818182px;width:200px;top:700px;font-size:11.5px;line-height:20px;color:#5b6472;font-weight:400;text-align:center;">12</span>
<span class="t" style="left:871.7878787878788px;width:200px;top:700px;font-size:11.5px;line-height:20px;color:#5b6472;font-weight:400;text-align:center;">13</span>
<span class="t" style="left:900.3939393939394px;width:200px;top:700px;font-size:11.5px;line-height:20px;color:#5b6472;font-weight:400;text-align:center;">14</span>
<span class="t" style="left:929.0px;width:200px;top:700px;font-size:11.5px;line-height:20px;color:#5b6472;font-weight:400;text-align:center;">15</span>
<span class="t" style="left:957.6060606060605px;width:200px;top:700px;font-size:11.5px;line-height:20px;color:#5b6472;font-weight:400;text-align:center;">16</span>
<span class="t" style="left:986.2121212121212px;width:200px;top:700px;font-size:11.5px;line-height:20px;color:#5b6472;font-weight:400;text-align:center;">17</span>
<span class="t" style="left:1014.8181818181818px;width:200px;top:700px;font-size:11.5px;line-height:20px;color:#5b6472;font-weight:400;text-align:center;">18</span>
<span class="t" style="left:1043.4242424242425px;width:200px;top:700px;font-size:11.5px;line-height:20px;color:#5b6472;font-weight:400;text-align:center;">19</span>
<span class="t" style="left:1072.030303030303px;width:200px;top:700px;font-size:11.5px;line-height:20px;color:#5b6472;font-weight:400;text-align:center;">20</span>
<span class="t" style="left:1100.6363636363635px;width:200px;top:700px;font-size:11.5px;line-height:20px;color:#5b6472;font-weight:400;text-align:center;">10</span>
<span class="t" style="left:1129.2424242424242px;width:200px;top:700px;font-size:11.5px;line-height:20px;color:#5b6472;font-weight:400;text-align:center;">11</span>
<span class="t" style="left:1157.848484848485px;width:200px;top:700px;font-size:11.5px;line-height:20px;color:#5b6472;font-weight:400;text-align:center;">12</span>
<span class="t" style="left:1186.4545454545455px;width:200px;top:700px;font-size:11.5px;line-height:20px;color:#5b6472;font-weight:400;text-align:center;">13</span>
<span class="t" style="left:1215.060606060606px;width:200px;top:700px;font-size:11.5px;line-height:20px;color:#5b6472;font-weight:400;text-align:center;">14</span>
<span class="t" style="left:1243.6666666666665px;width:200px;top:700px;font-size:11.5px;line-height:20px;color:#5b6472;font-weight:400;text-align:center;">15</span>
<span class="t" style="left:1272.2727272727273px;width:200px;top:700px;font-size:11.5px;line-height:20px;color:#5b6472;font-weight:400;text-align:center;">16</span>
<span class="t" style="left:1300.878787878788px;width:200px;top:700px;font-size:11.5px;line-height:20px;color:#5b6472;font-weight:400;text-align:center;">17</span>
<span class="t" style="left:1329.4848484848485px;width:200px;top:700px;font-size:11.5px;line-height:20px;color:#5b6472;font-weight:400;text-align:center;">18</span>
<span class="t" style="left:1358.090909090909px;width:200px;top:700px;font-size:11.5px;line-height:20px;color:#5b6472;font-weight:400;text-align:center;">19</span>
<span class="t" style="left:1386.6969696969695px;width:200px;top:700px;font-size:11.5px;line-height:20px;color:#5b6472;font-weight:400;text-align:center;">20</span>
<span class="t" style="left:614.3333333333334px;width:200px;top:720.5px;font-size:11.5px;line-height:20px;color:#5b6472;font-weight:400;text-align:center;">Los Angles</span>
<span class="t" style="left:929.0px;width:200px;top:720.5px;font-size:11.5px;line-height:20px;color:#5b6472;font-weight:400;text-align:center;">San Diego</span>
<span class="t" style="left:1243.6666666666665px;width:200px;top:720.5px;font-size:11.5px;line-height:20px;color:#5b6472;font-weight:400;text-align:center;">San Francisco</span>
<span class="t" style="left:426.4px;top:462px;width:160px;text-align:center;font-size:13px;line-height:20px;color:#5b6472;transform:rotate(90deg);">phase/voltage/current</span>
<span class="t" style="left:863px;top:749px;font-size:12px;line-height:20px;color:#5b6472;font-weight:400;">指标名称</span>
<div class="r" style="left:926px;top:752px;width:11.7px;height:11.5px;background:#6689e8;border-radius:2px;"></div>
<span class="t" style="left:942px;top:749.5px;font-size:12px;line-height:20px;color:#5b6472;font-weight:400;">phase</span>
<div class="r" style="left:983px;top:752px;width:11.7px;height:11.5px;background:#3f5577;border-radius:2px;"></div>
<span class="t" style="left:999.2px;top:749.5px;font-size:12px;line-height:20px;color:#5b6472;font-weight:400;">voltage</span>
<div class="r" style="left:1047.3px;top:752px;width:11.7px;height:11.5px;background:#52b4a6;border-radius:2px;"></div>
<span class="t" style="left:1063.6px;top:749.5px;font-size:12px;line-height:20px;color:#5b6472;font-weight:400;">current</span>
<div class="r" style="left:500px;top:792px;width:14px;height:14px;background:#2f5bd8;border-radius:2.5px;"></div>
<svg class="r" style="left:500px;top:792px;" width="14" height="14" viewBox="0 0 14 14"><path d="M3 7.2L5.8 10L11 4.3" fill="none" stroke="#fff" stroke-width="1.8"/></svg>
<span class="t" style="left:520.6px;top:789px;font-size:12px;line-height:20px;color:#1d2a44;font-weight:400;">查看所有数据</span>
<svg class="r" style="left:598px;top:792px;" width="14" height="14" viewBox="0 0 14 14"><circle cx="7" cy="7" r="6.3" fill="none" stroke="#1d2a44" stroke-width="1.2"/><rect x="6.3" y="6" width="1.4" height="4.8" fill="#1d2a44"/><circle cx="7" cy="4.1" r="0.9" fill="#1d2a44"/></svg>
<svg class="r" style="left:224.5px;top:442px;" width="10" height="16" viewBox="0 0 10 16"><circle cx="1.6" cy="2.4" r="1.05" fill="#1d2a44"/><circle cx="1.6" cy="8" r="1.05" fill="#1d2a44"/><circle cx="1.6" cy="13.4" r="1.05" fill="#1d2a44"/><circle cx="8.25" cy="2.4" r="1.05" fill="#1d2a44"/><circle cx="8.25" cy="8" r="1.05" fill="#1d2a44"/><circle cx="8.25" cy="13.4" r="1.05" fill="#1d2a44"/></svg>
<div class="r" style="left:1523px;top:0px;width:3px;height:862px;background:#433835;"></div>
<svg class="r" style="left:0px;top:852px;" width="10" height="10" viewBox="0 0 10 10"><path d="M0 0V10H10A10 10 0 0 1 0 0Z" fill="#2a2320"/></svg>
<svg class="r" style="left:1513px;top:852px;" width="10" height="10" viewBox="0 0 10 10"><path d="M10 0V10H0A10 10 0 0 0 10 0Z" fill="#2a2320"/></svg>
</body></html>
